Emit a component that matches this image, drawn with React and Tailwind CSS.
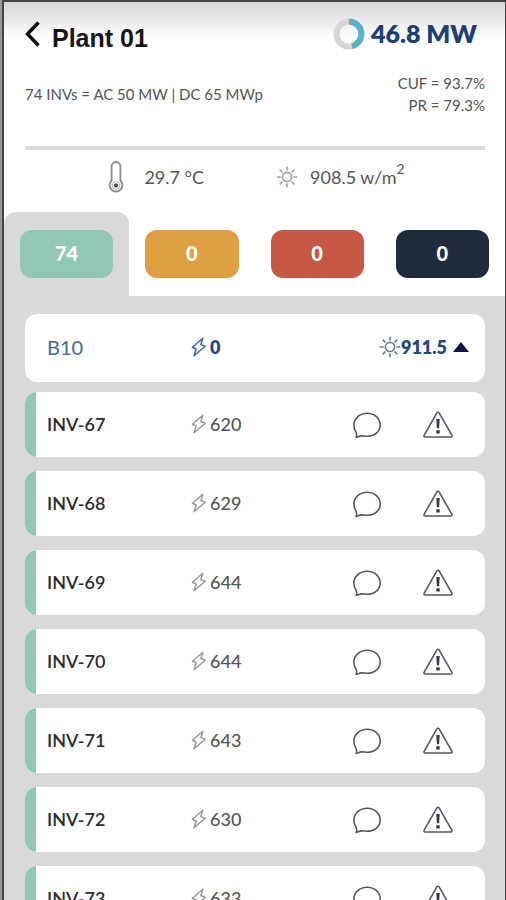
import { useState } from "react";

const tabs = [
    { id: "active", label: "Active", count: 74, color: "bg-[#92c7b5]" },
    { id: "warning", label: "Warning", count: 0, color: "bg-[#dfa043]" },
    { id: "fault", label: "Fault", count: 0, color: "bg-[#c65845]" },
    { id: "offline", label: "Offline", count: 0, color: "bg-[#202a3b]" },
];

const inverters = [
    { name: "INV-67", power: 620 },
    { name: "INV-68", power: 629 },
    { name: "INV-69", power: 644 },
    { name: "INV-70", power: 644 },
    { name: "INV-71", power: 643 },
    { name: "INV-72", power: 630 },
    { name: "INV-73", power: 633 },
];

function SunIcon({ className }) {
    return (
        <svg viewBox="0 0 22 22" className={className} fill="none" stroke="currentColor" strokeWidth="1.7" aria-hidden="true">
            <circle cx="11" cy="11" r="4.6" />
            <path d="M11 .8v3.8M11 17.4v3.8M.8 11h3.8M17.4 11h3.8M3.7 3.700l2.800 2.800M15.500 15.500l2.800 2.800M3.700 18.300l2.800-2.800M15.500 6.500l2.800-2.800" />
        </svg>
    );
}

function BoltIcon({ className }) {
    return (
        <svg viewBox="0 0 16 20" className={className} fill="none" stroke="currentColor" strokeWidth="1.5" strokeLinejoin="round" aria-hidden="true">
            <path d="M11.800 1.200 1.400 10.200l3.800 1.800-2.200 6.800L14.200 9.200 9.800 7.600z" />
        </svg>
    );
}

function ThermometerIcon() {
    return (
        <svg viewBox="0 0 16 32" className="w-4 h-8" fill="none" aria-hidden="true">
            <path d="M3.600 19.500V5.400a4.400 4.400 0 0 1 8.800 0v14.100a6.400 6.400 0 1 1-8.800 0z" stroke="#8a8a8a" strokeWidth="1.800" />
            <path d="M8 20.500a3.900 3.900 0 1 1 0 7.800 3.900 3.900 0 0 1 0-7.800z" stroke="#b5b5b5" />
            <circle cx="8" cy="24.400" r="2.200" fill="#555" />
        </svg>
    );
}

function CommentIcon() {
    return (
        <svg viewBox="0 0 28 28" className="w-7 h-7" fill="none" stroke="#555861" strokeWidth="1.600" strokeLinejoin="round" aria-hidden="true">
            <path d="M3.200 26.400c.7-2 .6-3.800-.3-5.600C1.500 18.800.9 16.500.9 14.200.9 7.500 6.800 2.200 14.200 2.200s13 5.200 13 11.800-5.800 11.300-13 11.300c-2.200 0-3.700-.6-5.400-.4-1.700.2-3.600.9-5.600 1.500z" />
        </svg>
    );
}

function AlertIcon() {
    return (
        <svg viewBox="0 0 30 28" className="w-[30px] h-7" fill="none" stroke="#555861" strokeWidth="1.600" strokeLinejoin="round" aria-hidden="true">
            <path d="M13.900 1.900c.5-.8 1.700-.8 2.200 0l12.700 22.300c.5.900 0 1.800-1 1.800H2.200c-1 0-1.500-.9-1-1.800z" />
            <path d="M13.300 8h3.400l-.6 9.200h-2.200zM13.300 19.200h3.400v3.300h-3.400z" fill="#34384a" stroke="none" />
        </svg>
    );
}

function InverterRow({ inverter }) {
    return (
        <li className="flex items-center h-[65px] shrink-0 pr-8 rounded-xl overflow-hidden bg-white">
            <span className="w-[11px] h-full bg-[#92c7b5]" />
            <span className="w-36 ml-[11px] pb-0.5 text-lg font-semibold text-[#2c2c2c]">{inverter.name}</span>
            <span className="flex items-center gap-[3px] pb-0.5 text-lg font-medium text-[#565656]">
                <BoltIcon className="w-4 h-5 text-[#999]" />
                {inverter.power}
            </span>
            <div className="flex items-center gap-[42px] ml-auto">
                <button type="button" aria-label={`Comments on ${inverter.name}`}>
                    <CommentIcon />
                </button>
                <button type="button" aria-label={`Alerts for ${inverter.name}`}>
                    <AlertIcon />
                </button>
            </div>
        </li>
    );
}

export default function App() {
    const [activeTab, setActiveTab] = useState("active");
    const [open, setOpen] = useState(true);

    return (
        <div className="h-screen bg-[#999] pl-0.5 font-[Lato,'Liberation_Sans',sans-serif]">
            <div className="flex flex-col h-full border-t-2 border-l-2 border-r border-[#444] bg-white">
                {/* Header */}
                <div className="pl-[21px] pr-5 bg-linear-to-b from-[#d4d4d4] to-white to-25%">
                    <header className="flex items-center justify-between h-16">
                        <div className="flex items-center gap-3">
                            <button type="button" aria-label="Back">
                                <svg viewBox="0 0 15 26" className="w-[15px] h-[26px]" fill="none" stroke="#111" strokeWidth="3.500" aria-hidden="true">
                                    <path d="M13.500 1.500 2.500 13l11 11.500" />
                                </svg>
                            </button>
                            <h1 className="pt-2 text-[25px] leading-8 font-bold text-[#161616] font-['Liberation_Sans',sans-serif]">Plant 01</h1>
                        </div>
                        <div className="flex items-center gap-1.5 pr-2">
                            <svg viewBox="0 0 32 32" className="w-8 h-8" fill="none" strokeWidth="6" aria-hidden="true">
                                <circle cx="16" cy="16" r="12.500" stroke="#d6d6d6" />
                                <path d="M16 3.500a12.500 12.500 0 0 1 3 24.600" stroke="#5bb1c6" />
                            </svg>
                            <span className="pb-0.5 text-[25px] leading-8 font-extrabold text-[#1d3f73]">46.8 MW</span>
                        </div>
                    </header>
                    <div className="flex items-center justify-between pt-1.5 pb-[30px] text-[15px] leading-[22px] text-[#555]">
                        <p>74 INVs = AC 50 MW | DC 65 MWp</p>
                        <p className="text-right">
                            CUF = 93.7%
                            <br />
                            PR = 79.3%
                        </p>
                    </div>
                </div>
                <hr className="ml-[21px] mr-5 border-t-4 border-[#dadada]" />

                {/* Weather */}
                <div className="flex items-center justify-center gap-[72px] h-[62px] shrink-0 pb-2 pl-1 text-lg text-[#555]">
                    <div className="flex items-center gap-5">
                        <ThermometerIcon />
                        <span>29.7 °C</span>
                    </div>
                    <div className="flex items-center gap-3">
                        <SunIcon className="w-[22px] h-[22px] text-[#a0a0a0]" />
                        <span>908.5 w/m<sup className="text-sm -top-2.5">2</sup></span>
                    </div>
                </div>

                {/* Status tabs */}
                <div className="grid grid-cols-4 shrink-0">
                    {tabs.map((tab) => (
                        <div key={tab.id} className={`px-4 py-[18px] rounded-t-xl ${activeTab === tab.id ? "bg-[#d9d9d9]" : ""}`}>
                            <button
                                type="button"
                                aria-label={`${tab.label}: ${tab.count}`}
                                onClick={() => setActiveTab(tab.id)}
                                className={`w-full h-12 pb-0.5 rounded-xl text-xl font-black text-white ${tab.color}`}
                            >
                                {tab.count}
                            </button>
                        </div>
                    ))}
                </div>

                {/* Inverter list */}
                <main className="flex-1 min-h-0 overflow-y-auto [scrollbar-width:none] pl-[21px] pr-5 pt-[18px] bg-[#d9d9d9]">
                    <button
                        type="button"
                        aria-expanded={open}
                        onClick={() => setOpen(!open)}
                        className="flex items-center w-full h-[68px] pb-0.5 pl-[22px] pr-4 rounded-xl bg-white text-left text-[#24477a]"
                    >
                        <span className="w-36 text-xl text-[#48678f]">B10</span>
                        <span className="flex items-center gap-[3px] text-lg font-extrabold">
                            <BoltIcon className="w-4 h-5 text-[#48678f]" />0
                        </span>
                        <span className="flex items-center ml-auto text-lg font-extrabold">
                            <SunIcon className="w-[22px] h-[22px] text-[#6480a0]" />
                            911.5
                            <svg viewBox="0 0 16 10" className="w-4 h-2.5 ml-1.5" fill="#14124a" aria-hidden="true">
                                <path d="M8 0l8 10H0z" />
                            </svg>
                        </span>
                    </button>
                    {open && (
                        <ul className="flex flex-col gap-3.5 pt-2.5 pb-4">
                            {inverters.map((inverter) => (
                                <InverterRow key={inverter.name} inverter={inverter} />
                            ))}
                        </ul>
                    )}
                </main>
            </div>
        </div>
    );
}
